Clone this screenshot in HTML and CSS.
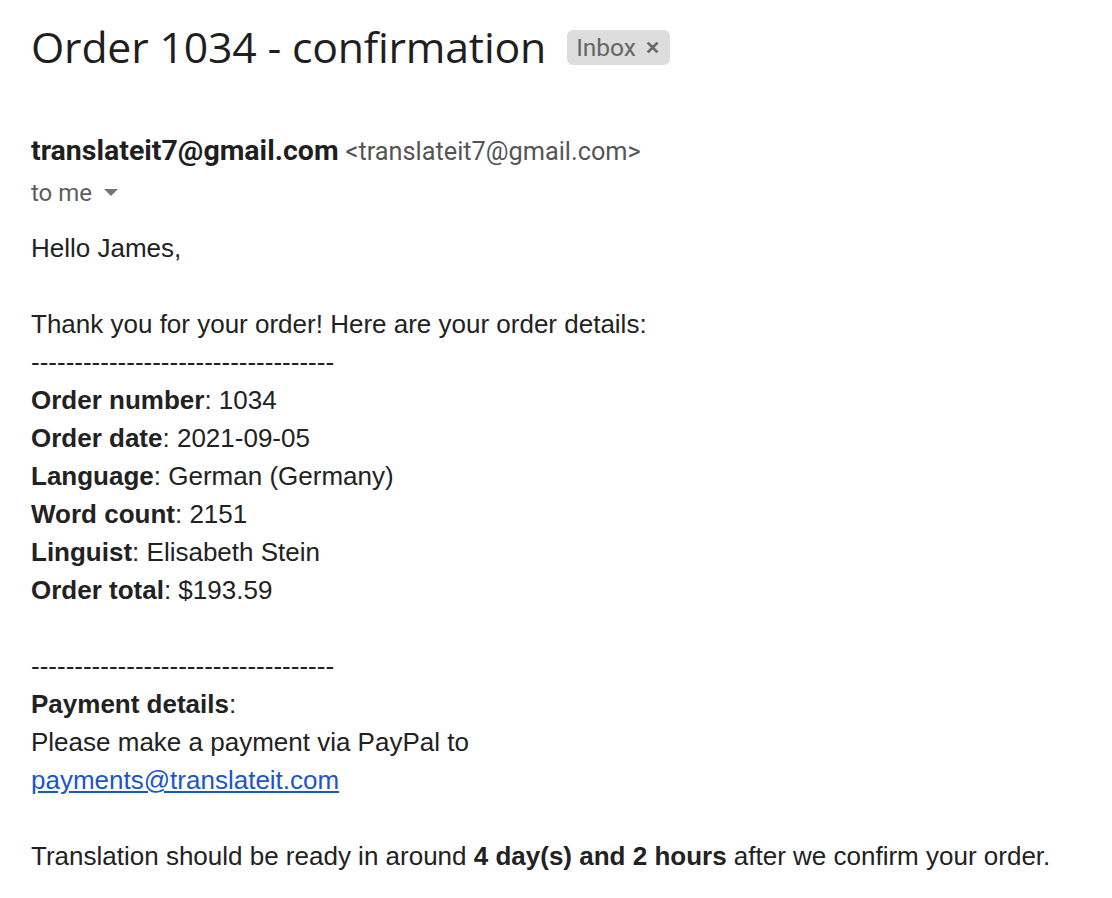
FILE: index.html
```html
<!DOCTYPE html>
<html>
<head>
<meta charset="utf-8">
<link rel="stylesheet" href="styles.css">
</head>
<body>
<div class="mail">
  <div class="subject-row">
    <h1 class="subject">Order 1034 - confirmation</h1>
    <span class="label">Inbox <span class="label-x">&#x2715;</span></span>
  </div>
  <div class="sender-block">
    <div class="from"><span class="from-name">translateit7@gmail.com</span> <span class="from-addr">&lt;translateit7@gmail.com&gt;</span></div>
    <div class="to">to me <svg class="caret" width="14" height="8" viewBox="0 0 14 8"><path d="M0 0 L14 0 L7 7 Z" fill="#747474"/></svg></div>
  </div>
  <div class="body">
    <div>Hello James,</div>
    <div><br></div>
    <div>Thank you for your order! Here are your order details:</div>
    <div>-----------------------------------</div>
    <div><b>Order number</b>: 1034</div>
    <div><b>Order date</b>: 2021-09-05</div>
    <div><b>Language</b>: German (Germany)</div>
    <div><b>Word count</b>: 2151</div>
    <div><b>Linguist</b>: Elisabeth Stein</div>
    <div><b>Order total</b>: $193.59</div>
    <div><br></div>
    <div>-----------------------------------</div>
    <div><b>Payment details</b>:</div>
    <div>Please make a payment via PayPal to</div>
    <div><a class="link" href="#">payments@translateit.com</a></div>
    <div><br></div>
    <div>Translation should be ready in around <b>4 day(s) and 2 hours</b> after we confirm your order.</div>
  </div>
</div>
</body>
</html>
```
FILE: styles.css
```css
html, body {
  margin: 0;
  padding: 0;
  background: #ffffff;
}
.mail {
  padding: 0 0 0 31px;
}
.subject-row {
  display: flex;
  align-items: center;
  gap: 21px;
  padding-top: 19px;
  height: 56px;
}
.subject {
  margin: 0;
  font-family: "Open Sans", Roboto, sans-serif;
  font-weight: 400;
  font-size: 42.8px;
  line-height: 56px;
  color: #1f1f1f;
  letter-spacing: -0.2px;
}
.label {
  display: inline-flex;
  align-items: center;
  gap: 9px;
  background: #dddddd;
  color: #666666;
  border-radius: 6px;
  height: 35px;
  padding: 0 10px 0 9px;
  font-family: Roboto, sans-serif;
  font-size: 24.5px;
}
.label-x {
  font-size: 18px;
  font-weight: 700;
  color: #666666;
}
.sender-block {
  margin-top: 57px;
  font-family: Roboto, sans-serif;
}
.from {
  line-height: 38px;
  color: #1f1f1f;
}
.from-name {
  font-weight: 700;
  font-size: 28.5px;
  margin-right: 3px;
}
.from-addr {
  font-size: 25.3px;
  color: #555555;
}
.to {
  font-size: 24px;
  color: #5e5e5e;
  line-height: 38px;
  display: flex;
  align-items: center;
  gap: 12px;
}
.body {
  margin-top: 17px;
  font-family: "Liberation Sans", Arial, sans-serif;
  font-size: 26px;
  line-height: 38px;
  color: #222222;
}
.body b {
  font-weight: 700;
}
.link {
  color: #1a55cc;
  text-decoration: underline;
}
```
